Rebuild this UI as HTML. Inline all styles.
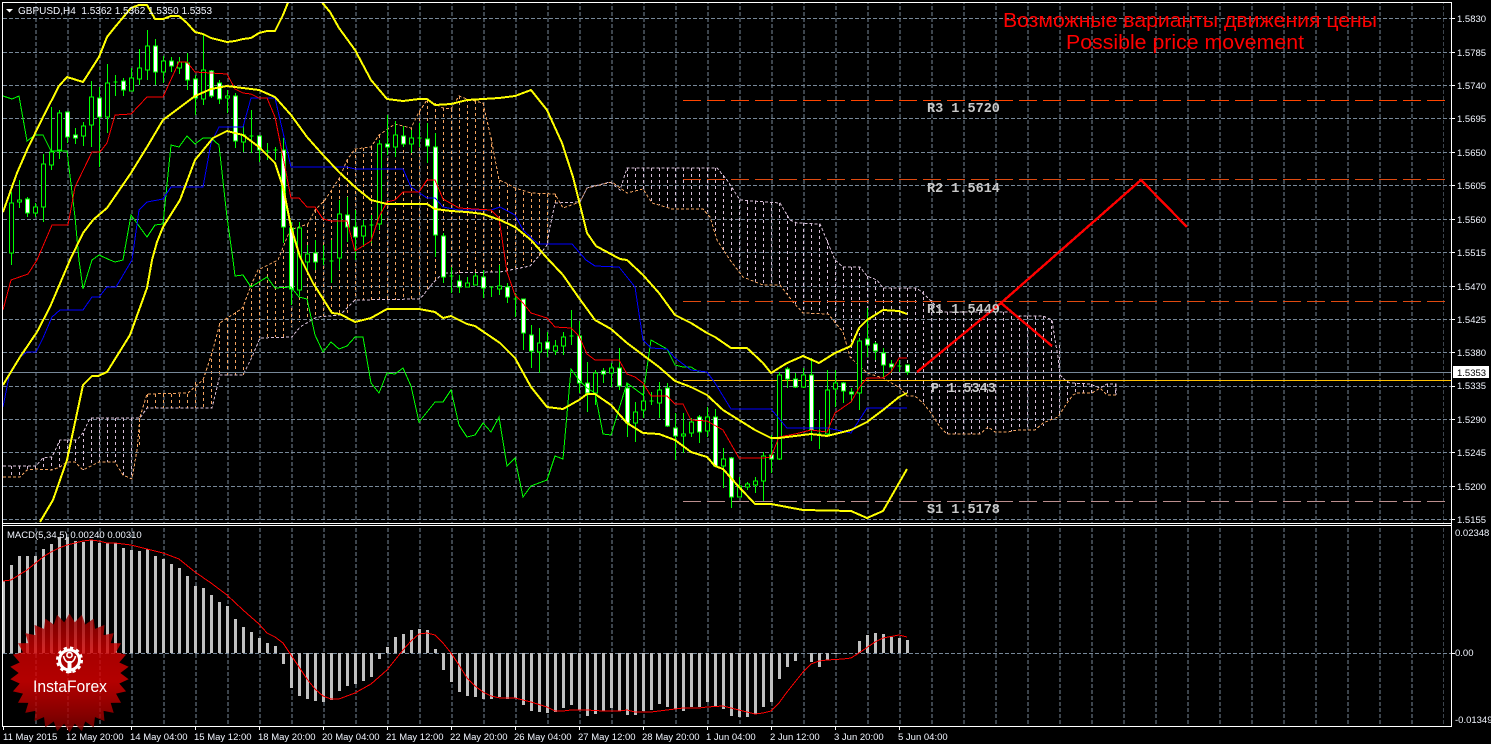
<!DOCTYPE html>
<html><head><meta charset="utf-8"><title>GBPUSD,H4</title>
<style>
html,body{margin:0;padding:0;background:#000;width:1491px;height:744px;overflow:hidden}
svg{display:block}
text{font-family:"Liberation Sans",sans-serif;font-size:9.5px;white-space:pre}
.ax{fill:#f2f6ff}
.m{font-family:"Liberation Mono",monospace;font-weight:bold;font-size:13.5px;fill:#c8c8c8}
.l{fill:none;shape-rendering:crispEdges}
</style></head><body>
<svg width="1491" height="744" viewBox="0 0 1491 744" xmlns="http://www.w3.org/2000/svg">
<defs>
<clipPath id="main"><rect x="3" y="3" width="1448" height="520"/></clipPath>
<linearGradient id="rg" x1="0" y1="0" x2="0" y2="1">
<stop offset="0" stop-color="#8c0000"/><stop offset=".3" stop-color="#d00000"/><stop offset=".55" stop-color="#e00000"/><stop offset=".8" stop-color="#a80000"/><stop offset="1" stop-color="#680000"/>
</linearGradient>
<polygon id="sp" points="63.2,624 69.5,613.5 75.8,624 75.8,673 63.2,673"/>
<clipPath id="star">
<circle cx="69.5" cy="673" r="51"/>
<use href="#sp"/><use href="#sp" transform="rotate(12 69.5 673)"/><use href="#sp" transform="rotate(24 69.5 673)"/><use href="#sp" transform="rotate(36 69.5 673)"/><use href="#sp" transform="rotate(48 69.5 673)"/><use href="#sp" transform="rotate(60 69.5 673)"/><use href="#sp" transform="rotate(72 69.5 673)"/><use href="#sp" transform="rotate(84 69.5 673)"/><use href="#sp" transform="rotate(96 69.5 673)"/><use href="#sp" transform="rotate(108 69.5 673)"/><use href="#sp" transform="rotate(120 69.5 673)"/><use href="#sp" transform="rotate(132 69.5 673)"/><use href="#sp" transform="rotate(144 69.5 673)"/><use href="#sp" transform="rotate(156 69.5 673)"/><use href="#sp" transform="rotate(168 69.5 673)"/><use href="#sp" transform="rotate(180 69.5 673)"/><use href="#sp" transform="rotate(192 69.5 673)"/><use href="#sp" transform="rotate(204 69.5 673)"/><use href="#sp" transform="rotate(216 69.5 673)"/><use href="#sp" transform="rotate(228 69.5 673)"/><use href="#sp" transform="rotate(240 69.5 673)"/><use href="#sp" transform="rotate(252 69.5 673)"/><use href="#sp" transform="rotate(264 69.5 673)"/><use href="#sp" transform="rotate(276 69.5 673)"/><use href="#sp" transform="rotate(288 69.5 673)"/><use href="#sp" transform="rotate(300 69.5 673)"/><use href="#sp" transform="rotate(312 69.5 673)"/><use href="#sp" transform="rotate(324 69.5 673)"/><use href="#sp" transform="rotate(336 69.5 673)"/><use href="#sp" transform="rotate(348 69.5 673)"/>
</clipPath>
<pattern id="vg" x="3.5" y="0" width="32" height="6" patternUnits="userSpaceOnUse"><rect x="0" y="0" width="1" height="4" fill="#778899"/></pattern>
</defs>
<rect width="1491" height="744" fill="#000"/>

<!-- grid -->
<rect x="35" y="3" width="1409" height="520" fill="url(#vg)" shape-rendering="crispEdges"/>
<rect x="35" y="526" width="1409" height="200" fill="url(#vg)" shape-rendering="crispEdges"/>
<path class="l" stroke="#778899" stroke-dasharray="4,2" d="M3 18.5H1451M3 52.5H1451M3 85.5H1451M3 118.5H1451M3 152.5H1451M3 185.5H1451M3 219.5H1451M3 252.5H1451M3 286.5H1451M3 319.5H1451M3 352.5H1451M3 386.5H1451M3 419.5H1451M3 452.5H1451M3 486.5H1451M3 519.5H1451M3 653.5H1451"/>

<!-- MACD histogram -->
<path class="l" stroke="#c0c0c0" stroke-width="3" d="M3.5 653V581M11.5 653V565M19.5 653V556M27.5 653V556M35.5 653V556M43.5 653V549M51.5 653V544M59.5 653V537M67.5 653V537M75.5 653V541M83.5 653V542M91.5 653V540M99.5 653V543M107.5 653V543M115.5 653V543M123.5 653V548M131.5 653V550M139.5 653V551M147.5 653V549M155.5 653V556M163.5 653V559M171.5 653V564M179.5 653V568M187.5 653V576M195.5 653V586M203.5 653V588M211.5 653V595M219.5 653V602M227.5 653V606M235.5 653V619M243.5 653V627M251.5 653V632M259.5 653V638M267.5 653V643M275.5 653V646M283.5 653V664M291.5 653V688M299.5 653V696M307.5 653V699M315.5 653V701M323.5 653V702M331.5 653V700M339.5 653V691M347.5 653V686M355.5 653V684M363.5 653V681M371.5 653V677M379.5 653V659M387.5 653V647M395.5 653V637M403.5 653V634M411.5 653V630M419.5 653V629M427.5 653V630M435.5 653V649M443.5 653V670M451.5 653V682M459.5 653V692M467.5 653V696M475.5 653V697M483.5 653V699M491.5 653V699M499.5 653V697M507.5 653V699M515.5 653V698M523.5 653V705M531.5 653V711M539.5 653V712M547.5 653V713M555.5 653V712M563.5 653V708M571.5 653V705M579.5 653V710M587.5 653V716M595.5 653V714M603.5 653V711M611.5 653V708M619.5 653V711M627.5 653V715M635.5 653V715M643.5 653V711M651.5 653V710M659.5 653V704M667.5 653V707M675.5 653V709M683.5 653V711M691.5 653V707M699.5 653V707M707.5 653V702M715.5 653V706M723.5 653V709M731.5 653V716M739.5 653V717M747.5 653V717M755.5 653V714M763.5 653V707M771.5 653V702M779.5 653V679M787.5 653V667M795.5 653V661M811.5 653V662M819.5 653V667M827.5 653V660M835.5 653V654M859.5 653V641M867.5 653V635M875.5 653V633M883.5 653V634M891.5 653V637M899.5 653V638M907.5 653V640"/>
<polyline fill="none" stroke="#ff0000" shape-rendering="crispEdges" points="3,581 11,580 19,575 27,570 43,557 51,552 59,548 67,545 83,541 91,540 99,541 107,543 115,543 131,545 147,549 163,553 179,559 195,572 211,583 227,595 243,610 259,624 267,633 275,637 283,643 291,655 299,667 307,679 315,689 323,696 331,699 339,699 355,693 371,684 387,670 403,650 411,641 419,634 427,633 435,635 443,643 451,653 459,665 467,678 475,686 483,692 491,696 500,698 515,698 531,702 547,707 555,711 563,711 571,710 587,710 603,711 619,711 627,710 635,712 651,712 667,710 683,708 699,708 707,707 723,706 739,710 755,714 763,713 771,711 779,703 787,692 795,682 803,672 811,664 819,661 827,660 843,659 851,658 859,653 875,642 883,638 899,635 907,637"/>

<g clip-path="url(#main)">
<!-- cloud -->
<path class="l" stroke="#d8bfd8" stroke-dasharray="3,3" d="M11.5 466V477M19.5 466V477M27.5 466V470M35.5 466V469M43.5 458V470M51.5 457V470M59.5 440V467M67.5 440V462M75.5 440V462M83.5 433V470M91.5 418V466M99.5 418V462M107.5 418V462M115.5 418V462M123.5 418V475M131.5 418V479M627.5 168V190M635.5 168V190M643.5 168V189M651.5 168V203M659.5 168V205M667.5 168V208M675.5 168V209M683.5 168V209M691.5 168V209M699.5 168V209M707.5 168V212M715.5 168V235M723.5 175V250M731.5 188V260M739.5 200V272M747.5 201V279M755.5 201V283M763.5 202V285M771.5 202V285M779.5 203V285M787.5 215V295M795.5 223V305M803.5 223V313M811.5 223V314M819.5 224V314M827.5 240V314M835.5 260V325M843.5 267V332M851.5 267V358M859.5 267V365M867.5 276V373M875.5 281V376M883.5 288V378M891.5 288V382M899.5 288V388M907.5 288V394M915.5 288V396M923.5 291V402M931.5 300V412M939.5 312V425M947.5 312V434M955.5 312V434M963.5 312V434M971.5 312V434M979.5 312V434M987.5 312V429M995.5 312V432M1003.5 312V432M1011.5 316V431M1019.5 316V430M1027.5 316V430M1035.5 316V430M1043.5 316V426M1051.5 320V420M1059.5 345V417M1067.5 380V403M1075.5 383V395M1083.5 384V393M1091.5 384V393M1107.5 384V395M1115.5 384V395"/>
<path class="l" stroke="#f4a460" stroke-dasharray="3,3" d="M139.5 418V446M147.5 394V408M155.5 394V408M163.5 394V408M171.5 394V408M179.5 394V408M187.5 394V408M195.5 382V408M203.5 380V408M211.5 353V408M219.5 323V375M227.5 318V375M235.5 312V375M243.5 307V375M251.5 283V357M259.5 270V338M267.5 268V337M275.5 263V337M283.5 250V337M291.5 230V327M299.5 225V322M307.5 224V317M315.5 210V316M323.5 200V316M331.5 190V315M339.5 178V315M347.5 160V315M355.5 149V300M363.5 148V300M371.5 147V300M379.5 135V300M387.5 128V300M395.5 124V300M403.5 126V300M411.5 128V300M419.5 112V299M427.5 100V290M435.5 103V283M443.5 108V273M451.5 109V273M459.5 96V273M467.5 99V273M475.5 101V273M483.5 103V273M491.5 138V272M499.5 180V272M507.5 184V270M515.5 188V268M523.5 192V265M531.5 193V262M539.5 193V256M547.5 194V245M555.5 194V205"/>
<polyline class="l" stroke="#f4a460" stroke-dasharray="3,2" points="3,477 20,477 27,470 36,469 52,470 60,467 67,462 75,462 83,470 99,462 115,462 123,475 132,479 137,450 140,417 147,394 188,393 203,380 212,353 220,323 227,318 237,312 243,307 252,283 258,270 278,260 290,230 308,224 315,210 325,200 340,177 347,160 355,149 371,147 379,135 395,124 411,128 419,112 427,100 443,108 451,109 459,96 467,99 483,103 491,138 499,180 506,183 515,188 531,193 555,194 563,208 580,202 587,188 612,182 627,193 643,189 652,203 672,209 703,209 710,217 717,240 730,260 743,277 763,285 780,285 793,302 803,313 828,314 843,332 850,357 867,373 883,378 900,388 907,396 915,396 923,403 931,413 940,427 947,434 980,434 988,427 995,432 1008,432 1017,430 1035,430 1043,423 1058,417 1067,403 1073,395 1077,393 1092,393 1100,388 1107,395 1116,395"/>
<polyline class="l" stroke="#d8bfd8" stroke-dasharray="3,2" points="3,466 36,466 43,458 52,457 60,440 77,440 83,433 90,418 140,418 147,408 212,408 220,375 243,375 252,357 260,338 292,337 300,327 317,317 340,315 355,300 420,299 433,283 443,273 500,272 530,266 538,257 547,245 550,227 555,203 580,202 587,188 610,182 620,190 627,168 717,168 727,180 740,200 780,203 790,220 797,223 820,224 835,260 843,267 860,267 867,276 877,280 883,288 917,288 927,297 935,305 943,312 1010,312 1017,316 1043,316 1052,320 1055,340 1058,357 1060,375 1065,380 1070,383 1090,384 1100,388 1107,384 1116,384 1116,395"/>

<!-- pivot lines -->
<path class="l" stroke="#ff4500" stroke-dasharray="18,6" d="M683 100.5H1445"/>
<path class="l" stroke="#e04a10" stroke-dasharray="18,6" d="M683 179.5H1445M683 301.5H1445"/>
<path class="l" stroke="#bc8f8f" stroke-dasharray="18,6" d="M683 501.5H1445"/>
<path class="l" stroke="#778899" d="M3 372.5H1451"/>
<path class="l" stroke="#ffc000" d="M683 380.5H1451"/>

<!-- candles -->
<path class="l" stroke="#00ff00" d="M11.5 192V265M19.5 180V208M27.5 197V217M35.5 203V217M43.5 154V222M51.5 107V170M59.5 110V159M67.5 112V143M75.5 128V144M83.5 122V146M91.5 81V147M99.5 87V167M107.5 64V133M115.5 75V96M123.5 78V96M131.5 68V91M139.5 49V85M147.5 30V80M155.5 39V85M163.5 56V83M171.5 57V72M179.5 57V74M187.5 53V90M195.5 75V115M203.5 35V105M211.5 70V98M219.5 80V104M227.5 90V113M235.5 93V148M243.5 125V152M251.5 110V153M259.5 135V162M267.5 143V160M275.5 147V160M283.5 138V243M291.5 222V305M299.5 222V296M307.5 245V270M315.5 240V270M323.5 245V265M331.5 240V283M339.5 200V270M347.5 197V242M355.5 210V260M363.5 220V247M371.5 215V243M379.5 140V230M387.5 115V155M395.5 121V157M403.5 126V147M411.5 130V153M419.5 123V147M427.5 123V163M435.5 133V257M443.5 233V283M451.5 267V293M459.5 275V293M467.5 277V287M475.5 273V285M483.5 270V298M491.5 287V297M499.5 265V295M507.5 283V303M515.5 293V317M523.5 299V350M531.5 325V368M539.5 328V373M547.5 332V357M555.5 340V355M563.5 332V355M571.5 310V345M579.5 321V393M587.5 362V412M595.5 370V405M603.5 368V383M611.5 363V387M619.5 348V390M627.5 383V437M635.5 402V442M643.5 385V418M651.5 392V405M659.5 382V418M667.5 383V427M675.5 413V460M683.5 413V453M691.5 418V437M699.5 415V443M707.5 407V437M715.5 409V467M723.5 448V488M731.5 457V508M739.5 477V497M747.5 482V490M755.5 477V493M763.5 452V501M771.5 435V473M779.5 372V460M787.5 367V388M795.5 373V388M803.5 368V388M811.5 358V441M819.5 410V449M827.5 370V437M835.5 370V407M843.5 382V403M851.5 388V402M859.5 338V410M867.5 308V357M875.5 342V360M883.5 348V378M891.5 360V373M899.5 360V372M907.5 365V375M113.5 82h4M249.5 136h4M265.5 151h4M273.5 150h4M321.5 259h4M329.5 261h4M369.5 225h4M417.5 138h4M449.5 276h4M489.5 287h4M513.5 299h4M569.5 336h4M649.5 401h4M817.5 434h4M897.5 366h4"/>
<path class="l" stroke="#00ff00" style="fill:#000" d="M9.5 203h4V253h-4zM17.5 200h4V202h-4zM33.5 207h4V213h-4zM41.5 164h4V207h-4zM49.5 152h4V165h-4zM57.5 113h4V150h-4zM81.5 126h4V136h-4zM89.5 97h4V125h-4zM105.5 83h4V117h-4zM129.5 78h4V91h-4zM137.5 68h4V79h-4zM145.5 46h4V70h-4zM161.5 61h4V72h-4zM177.5 62h4V68h-4zM201.5 70h4V99h-4zM225.5 96h4V98h-4zM241.5 135h4V142h-4zM297.5 228h4V290h-4zM305.5 254h4V262h-4zM337.5 214h4V258h-4zM361.5 226h4V236h-4zM377.5 144h4V224h-4zM393.5 135h4V147h-4zM409.5 138h4V144h-4zM465.5 283h4V287h-4zM473.5 276h4V285h-4zM497.5 286h4V289h-4zM537.5 343h4V352h-4zM553.5 346h4V351h-4zM561.5 337h4V346h-4zM593.5 373h4V393h-4zM609.5 368h4V373h-4zM633.5 412h4V423h-4zM641.5 401h4V410h-4zM657.5 390h4V403h-4zM681.5 434h4V436h-4zM689.5 422h4V433h-4zM705.5 417h4V431h-4zM721.5 459h4V466h-4zM737.5 486h4V497h-4zM745.5 484h4V487h-4zM753.5 481h4V485h-4zM761.5 456h4V481h-4zM777.5 375h4V459h-4zM801.5 375h4V387h-4zM825.5 390h4V434h-4zM833.5 383h4V389h-4zM857.5 341h4V393h-4z"/>
<path class="l" stroke="#00ff00" style="fill:#fff" d="M25.5 199h4V213h-4zM65.5 112h4V137h-4zM73.5 135h4V138h-4zM97.5 98h4V117h-4zM121.5 81h4V90h-4zM153.5 46h4V72h-4zM169.5 61h4V66h-4zM185.5 63h4V80h-4zM193.5 79h4V98h-4zM209.5 71h4V96h-4zM217.5 83h4V99h-4zM233.5 96h4V141h-4zM257.5 136h4V150h-4zM281.5 150h4V227h-4zM289.5 228h4V289h-4zM313.5 253h4V262h-4zM345.5 215h4V227h-4zM353.5 227h4V237h-4zM385.5 144h4V147h-4zM401.5 136h4V144h-4zM425.5 139h4V146h-4zM433.5 147h4V235h-4zM441.5 236h4V277h-4zM457.5 281h4V287h-4zM481.5 277h4V288h-4zM505.5 287h4V297h-4zM521.5 299h4V333h-4zM529.5 335h4V351h-4zM545.5 342h4V349h-4zM577.5 336h4V383h-4zM585.5 383h4V393h-4zM601.5 371h4V374h-4zM617.5 368h4V386h-4zM625.5 388h4V423h-4zM665.5 388h4V426h-4zM673.5 428h4V436h-4zM697.5 417h4V432h-4zM713.5 417h4V466h-4zM729.5 458h4V497h-4zM769.5 455h4V459h-4zM785.5 369h4V379h-4zM793.5 379h4V387h-4zM809.5 375h4V430h-4zM841.5 383h4V391h-4zM849.5 392h4V394h-4zM865.5 339h4V345h-4zM873.5 344h4V351h-4zM881.5 353h4V365h-4zM889.5 364h4V367h-4zM905.5 365h4V372h-4z"/>

<!-- indicator lines -->
<polyline class="l" stroke="#00ff00" points="3,96 12,99 19,96 27,141 35,135 43,135 51,151 67,151 75,217 79,260 83,289 92,260 99,255 110,260 115,262 123,260 131,215 147,237 155,225 163,224 171,145 179,147 187,136 195,144 203,138 211,138 219,145 227,217 233,260 235,276 243,275 251,287 267,277 275,288 291,287 299,297 307,299 315,335 323,352 331,342 339,349 347,346 355,337 363,337 371,383 379,393 387,373 395,374 403,368 411,386 419,422 435,402 443,402 451,390 459,425 467,437 475,435 483,423 491,432 499,417 507,466 515,458 523,497 531,486 547,480 555,456 563,459 571,369 579,380 587,388 595,393 603,434 611,435 627,383 643,395 651,340 667,349 675,365 683,367 691,367 699,372"/>
<polyline class="l" stroke="#0000ff" points="3,407 10,372 20,357 27,352 36,352 43,338 52,317 60,310 83,310 92,297 99,297 107,287 116,287 132,260 139,210 147,202 163,199 171,187 203,187 211,143 219,127 243,127 251,98 275,98 291,167 347,167 355,169 403,169 411,187 427,198 435,198 443,207 459,210 491,210 500,207 515,215 523,230 538,244 572,244 586,260 595,266 619,267 635,287 643,340 651,348 667,349 675,358 691,370 707,372 715,383 731,409 771,409 787,428 827,428 851,433 867,408 907,408"/>
<polyline class="l" stroke="#ff0000" points="3,310 11,280 28,274 37,260 52,225 68,225 75,187 92,152 100,152 107,143 115,115 131,114 147,97 163,97 179,62 187,62 195,72 227,74 235,89 243,93 251,94 259,98 267,98 275,117 283,157 291,198 299,198 307,207 315,207 323,219 331,221 347,221 355,251 371,241 379,217 387,202 395,200 403,192 419,192 427,180 435,180 443,199 459,208 491,210 499,218 507,272 515,295 523,303 531,313 547,318 555,327 571,328 579,336 587,354 595,360 619,360 627,374 635,377 643,383 651,396 667,396 675,404 683,404 691,420 707,421 723,430 739,458 763,458 771,457 779,437 795,434 811,430 827,432 835,413 851,402 859,388 867,378 883,378 891,372 899,358 907,358"/>
<g class="l" stroke="#ffff00" stroke-width="2" stroke-linejoin="round">
<polyline points="3,212 17,173 27,150 43,117 59,86 67,77 83,82 99,57 107,37 115,27 131,8 139,5 147,5 155,19 163,19 171,16 179,16 187,23 195,32 203,34 211,38 219,40 227,42 235,41 243,39 251,38 259,33 267,31 275,31 283,15 289,0 320,0 330,12 339,28 355,50 371,80 387,99 403,101 419,99 427,99 435,105 451,104 467,100 499,98 515,96 531,90 547,110 562,143 573,177 587,233 596,246 620,259 627,260 643,275 659,293 675,315 691,323 707,333 715,337 731,348 747,348 763,363 771,373 787,363 803,356 819,363 835,353 851,346 859,328 867,320 883,310 899,311 907,314"/>
<polyline points="3,385 20,357 37,332 50,307 70,260 83,233 93,220 107,208 131,173 147,147 163,120 179,108 195,96 211,89 227,86 243,88 259,90 275,97 291,115 307,137 323,155 339,172 355,187 371,200 387,204 419,204 427,204 435,209 451,211 467,212 483,214 500,220 515,227 531,240 547,258 563,275 579,298 595,320 611,329 627,343 643,355 659,367 675,381 691,387 707,395 723,410 739,420 755,430 771,438 779,438 811,434 827,436 851,430 867,422 883,410 899,397 907,393"/>
<polyline points="40,522 53,500 67,460 83,385 92,376 98,376 107,372 130,335 147,288 152,260 157,242 163,227 180,200 195,160 213,138 227,131 243,135 259,147 275,163 283,187 291,227 300,257 313,283 332,313 340,314 355,322 371,318 387,309 419,309 435,312 443,318 451,316 467,324 475,326 500,343 515,358 531,387 547,407 563,409 579,400 587,394 595,394 611,405 627,423 643,433 659,434 675,440 691,452 707,457 715,466 723,469 739,487 755,504 771,504 803,510 851,511 867,518 883,511 907,469"/>
</g>
<!-- price projection -->
<path class="l" stroke="#ff0000" stroke-width="2.4" d="M917 372L1001 303L1141 180L1187 227M1001 303L1052 346"/>
</g>

<!-- pivot labels -->
<text class="m" x="927" y="112">R3 1.5720</text>
<text class="m" x="927" y="192">R2 1.5614</text>
<text class="m" x="927" y="313">R1 1.5449</text>
<text class="m" x="931" y="392">P 1.5343</text>
<text class="m" x="927" y="513">S1 1.5178</text>

<!-- title -->
<text x="1003" y="27" fill="#ff0000" style="font-size:20px" textLength="374" lengthAdjust="spacingAndGlyphs">Возможные варианты движения цены</text>
<text x="1066" y="49" fill="#ff0000" style="font-size:20px" textLength="238" lengthAdjust="spacingAndGlyphs">Possible price movement</text>

<!-- frame -->
<path class="l" stroke="#fff" d="M2.5 727V2.5H1451.5V727M2 523.5H1452M2 525.5H1452M2 726.5H1452"/>
<path class="l" stroke="#fff" d="M1452 18.5h3M1452 52.5h3M1452 85.5h3M1452 118.5h3M1452 152.5h3M1452 185.5h3M1452 219.5h3M1452 252.5h3M1452 286.5h3M1452 319.5h3M1452 352.5h3M1452 386.5h3M1452 419.5h3M1452 452.5h3M1452 486.5h3M1452 519.5h3M1452 653.5h3M3.5 727v3M67.5 727v3M131.5 727v3M195.5 727v3M259.5 727v3M323.5 727v3M387.5 727v3M451.5 727v3M515.5 727v3M579.5 727v3M643.5 727v3M707.5 727v3M771.5 727v3M835.5 727v3M899.5 727v3"/>

<!-- right axis -->
<text class="ax" x="1457" y="22">1.5830</text>
<text class="ax" x="1457" y="56">1.5785</text>
<text class="ax" x="1457" y="89">1.5740</text>
<text class="ax" x="1457" y="122">1.5695</text>
<text class="ax" x="1457" y="156">1.5650</text>
<text class="ax" x="1457" y="189">1.5605</text>
<text class="ax" x="1457" y="223">1.5560</text>
<text class="ax" x="1457" y="256">1.5515</text>
<text class="ax" x="1457" y="290">1.5470</text>
<text class="ax" x="1457" y="323">1.5425</text>
<text class="ax" x="1457" y="356">1.5380</text>
<text class="ax" x="1457" y="389">1.5335</text>
<text class="ax" x="1457" y="423">1.5290</text>
<text class="ax" x="1457" y="456">1.5245</text>
<text class="ax" x="1457" y="490">1.5200</text>
<text class="ax" x="1457" y="523">1.5155</text>
<text class="ax" x="1455" y="536">0.02348</text>
<text class="ax" x="1455" y="656">0.00</text>
<text class="ax" x="1455" y="723">-0.01349</text>
<rect x="1453" y="366" width="36" height="12" fill="#fff"/>
<text x="1457" y="376" fill="#000">1.5353</text>

<!-- time axis -->
<text class="ax" x="3" y="740">11 May 2015</text>
<text class="ax" x="66" y="740">12 May 20:00</text>
<text class="ax" x="130" y="740">14 May 04:00</text>
<text class="ax" x="194" y="740">15 May 12:00</text>
<text class="ax" x="258" y="740">18 May 20:00</text>
<text class="ax" x="322" y="740">20 May 04:00</text>
<text class="ax" x="386" y="740">21 May 12:00</text>
<text class="ax" x="450" y="740">22 May 20:00</text>
<text class="ax" x="514" y="740">26 May 04:00</text>
<text class="ax" x="578" y="740">27 May 12:00</text>
<text class="ax" x="642" y="740">28 May 20:00</text>
<text class="ax" x="706" y="740">1 Jun 04:00</text>
<text class="ax" x="770" y="740">2 Jun 12:00</text>
<text class="ax" x="834" y="740">3 Jun 20:00</text>
<text class="ax" x="898" y="740">5 Jun 04:00</text>

<!-- header -->
<path fill="#fff" d="M6 9h7l-3.5 3.5z"/>
<text class="ax" x="18" y="14" style="font-size:10px">GBPUSD,H4  1.5362 1.5362 1.5350 1.5353</text>
<text class="ax" x="7" y="538">MACD(5,34,5) 0.00240 0.00310</text>

<!-- logo -->
<rect x="5" y="610" width="130" height="130" fill="url(#rg)" clip-path="url(#star)" opacity=".8"/>
<g>
<circle cx="69.5" cy="660" r="10" fill="none" stroke="#fff" stroke-width="3"/>
<circle cx="69.5" cy="660" r="12.2" fill="none" stroke="#fff" stroke-width="2.6" stroke-dasharray="3.3,3.1"/>
<circle cx="69.5" cy="655" r="2.6" fill="none" stroke="#fff" stroke-width="1.6"/>
<path d="M63.5 656q1 5 4.5 6.5M75.5 656q-1 5-4.5 6.5" fill="none" stroke="#fff" stroke-width="1.6"/>
<rect x="67.5" y="661" width="4" height="12" fill="#fff"/>
</g>
<text x="33" y="692" fill="#fff" style="font-size:16.5px" textLength="74" lengthAdjust="spacingAndGlyphs">InstaForex</text>
</svg>
</body></html>
